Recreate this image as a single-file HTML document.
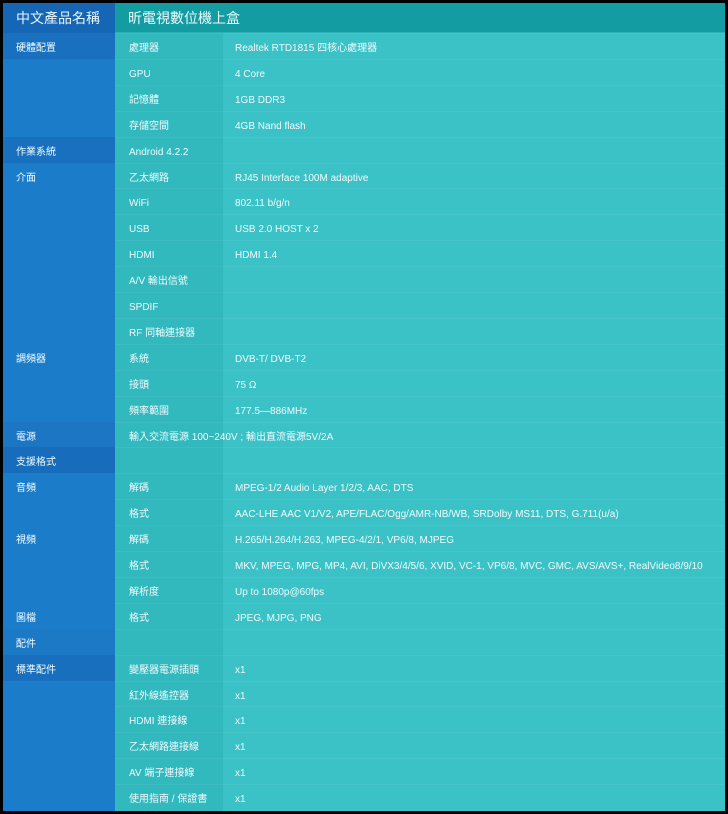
<!DOCTYPE html>
<html><head><meta charset="utf-8"><style>
body{margin:0;background:#000;width:728px;height:814px;overflow:hidden;font-family:"Liberation Sans","Noto Sans CJK TC",sans-serif;}
#w{position:absolute;left:3px;top:3px;width:722px;height:808px;background:#3bc2c7;}
.hl{position:absolute;left:0;top:0;width:112px;height:30px;background:#1566b4;color:#e8f4ff;font-size:14px;line-height:30px;padding-left:13px;box-sizing:border-box;}
.hr{position:absolute;left:112px;top:0;width:610px;height:30px;background:#139da2;color:#eafcff;font-size:14px;line-height:30px;padding-left:13px;box-sizing:border-box;border-bottom:1px solid #2ab0b5;}
.lc{position:absolute;left:0;top:30px;width:112px;height:778px;background:#1b7cca;}
.mc{position:absolute;left:112px;top:30px;width:108px;height:778px;background:#31b9be;}
.r{position:absolute;left:0;width:722px;height:25.9px;font-size:10px;}
.r div{position:absolute;top:10px;height:12px;line-height:12px;white-space:nowrap;color:#f0fbff;}
.a{left:13px}.b{left:126px}.c{left:232px}
.ln{position:absolute;left:112px;width:610px;height:1px;background:rgba(255,255,255,.06);}
.dk{position:absolute;left:0;width:112px;height:26px;}
</style></head><body><div id="w">
<div class="hl">中文產品名稱</div><div class="hr">昕電視數位機上盒</div>
<div class="lc"></div><div class="mc"></div>
<div id="dks"></div>
<div id="rows"></div>
</div>
<script>
var H=25.9;
var dk=[[0,"#1870bf"],[4,"#1870bf"],[15,"#1c76c4"],[16,"#176dbb"],[23,"#1b79c6"],[24,"#186fbe"]],g="";
for(var k=0;k<dk.length;k++)g+='<div class="dk" style="top:'+(30+dk[k][0]*H).toFixed(1)+'px;background:'+dk[k][1]+'"></div>';
document.getElementById("dks").innerHTML=g;
var d=[["硬體配置","處理器","Realtek RTD1815 四核心處理器"],["","GPU","4 Core"],["","記憶體","1GB DDR3"],["","存儲空間","4GB Nand flash"],["作業系統","Android 4.2.2",""],["介面","乙太網路","RJ45 Interface 100M adaptive"],["","WiFi","802.11 b/g/n"],["","USB","USB 2.0 HOST x 2"],["","HDMI","HDMI 1.4"],["","A/V 輸出信號",""],["","SPDIF",""],["","RF 同軸連接器",""],["調頻器","系統","DVB-T/ DVB-T2"],["","接頭","75 Ω"],["","頻率範圍","177.5—886MHz"],["電源","輸入交流電源 100~240V ; 輸出直流電源5V/2A",""],["支援格式","",""],["音頻","解碼","MPEG-1/2 Audio Layer 1/2/3, AAC, DTS"],["","格式","AAC-LHE AAC V1/V2, APE/FLAC/Ogg/AMR-NB/WB, SRDolby MS11, DTS, G.711(u/a)"],["視頻","解碼","H.265/H.264/H.263, MPEG-4/2/1, VP6/8, MJPEG"],["","格式","MKV, MPEG, MPG, MP4, AVI, DiVX3/4/5/6, XVID, VC-1, VP6/8, MVC, GMC, AVS/AVS+, RealVideo8/9/10"],["","解析度","Up to 1080p@60fps"],["圖檔","格式","JPEG, MJPG, PNG"],["配件","",""],["標準配件","變壓器電源插頭","x1"],["","紅外線遙控器","x1"],["","HDMI 連接線","x1"],["","乙太網路連接線","x1"],["","AV 端子連接線","x1"],["","使用指南 / 保證書","x1"]];
var h="";
for(var i=0;i<d.length;i++){var t=30+i*H;h+='<div class="ln" style="top:'+t.toFixed(1)+'px"></div><div class="r" style="top:'+t.toFixed(1)+'px"><div class="a">'+d[i][0]+'</div><div class="b">'+d[i][1]+'</div><div class="c">'+d[i][2]+'</div></div>';}
document.getElementById("rows").innerHTML=h;
</script>
</body></html>
